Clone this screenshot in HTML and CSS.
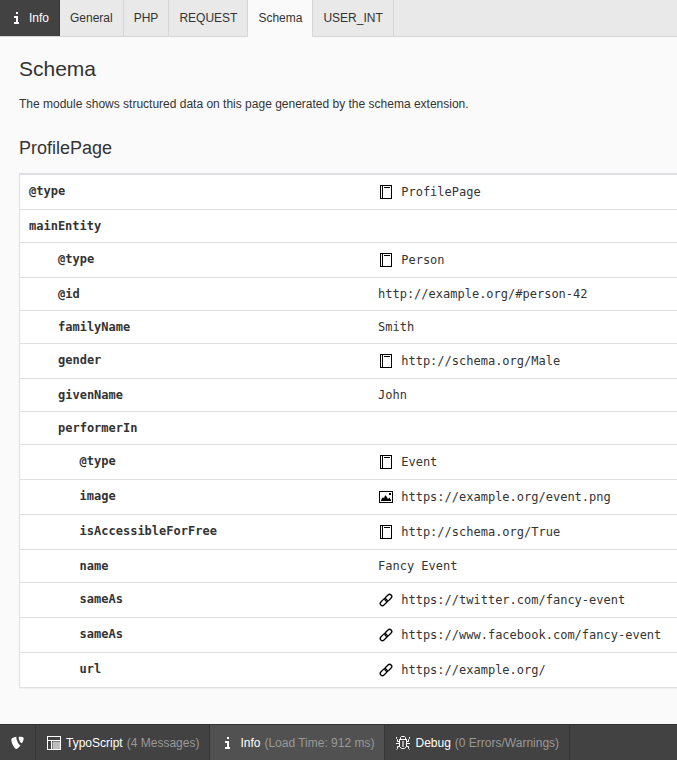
FILE: index.html
```
<!DOCTYPE html>
<html lang="en">
<head>
<meta charset="utf-8">
<title>Schema</title>
<link rel="stylesheet" href="styles.css">
</head>
<body>
<svg class="defs" width="0" height="0">
  <symbol id="book" viewBox="0 0 16 16"><path fill-rule="evenodd" d="M2 1h12v14H2zM3 2v12h1V2zM5 2v12h8V2z"/><path d="M6 3h6v1H6z"/></symbol>
  <symbol id="image" viewBox="0 0 16 16"><path fill-rule="evenodd" d="M1 2h14v12H1zM2 3v10h12V3z"/><path d="M3 12v-1l1.500-2.500h.8l.7.800L7 6.500h.800L10 10l1.500-1.500L13 11v1zM11 4h2v2h-2z"/></symbol>
  <symbol id="link" viewBox="0 0 16 16"><g fill="none" stroke="currentColor" stroke-width="1.300"><rect x="1.700" y="8" width="8" height="4.400" rx="2.200" transform="rotate(-45 5.700 10.200)"/><rect x="6.300" y="3.600" width="8" height="4.400" rx="2.200" transform="rotate(-45 10.300 5.800)"/></g></symbol>
  <symbol id="info" viewBox="0 0 16 16"><path d="M7 2h2v2H7zM6 6h3v6h1v2H5v-2h2V8H5V6z"/></symbol>
  <symbol id="typo3" viewBox="-1 -1 18 18"><path d="M11.100 10.300c-.2.1-.4.100-.6.100-1.800 0-4.400-6.200-4.400-8.200 0-.8.200-1 .4-1.200C4.300 1.300 1.600 2.100.8 3.100c-.2.300-.3.700-.3 1.200C.500 7.500 3.900 14.700 6.300 14.700c1.100 0 3-1.800 4.800-4.400M10 1c2.200 0 4.400.4 4.400 1.600 0 2.500-1.600 5.500-2.400 5.500-1.400 0-3.200-4-3.200-6C8.800 1.200 9.200 1 10 1"/></symbol>
  <symbol id="template" viewBox="0 0 16 16"><path fill-rule="evenodd" d="M1 1h14v14H1zM2 2v3h12V2zM2 6v8h3V6zM6 6v8h8V6z"/><path opacity=".65" d="M6.500 6.500H14V14H6.500z"/></symbol>
  <symbol id="bug" viewBox="0 0 16 16"><path fill="none" stroke="currentColor" d="M5.500 4V2.500l1-1h3l1 1V4M4 4.500h8M4.500 5v6.500l2 2h3l2-2V5M4 8.500H1M12 8.500h3M4 6.500H2.500v-2l-1-1V2M12 6.500h1.500v-2l1-1V2M4.500 11.500h-2v2l-1 1M11.500 11.500h2v2l1 1"/><path opacity=".55" d="M7 6h2v6H7z"/></symbol>
</svg>
<div class="panel">
  <nav class="tabs">
    <div class="tab tab-title"><svg class="icon"><use href="#info"/></svg><span>Info</span></div>
    <div class="tab">General</div>
    <div class="tab">PHP</div>
    <div class="tab">REQUEST</div>
    <div class="tab tab-active">Schema</div>
    <div class="tab">USER_INT</div>
  </nav>
  <main class="content">
    <h1>Schema</h1>
    <p>The module shows structured data on this page generated by the schema extension.</p>
    <h2>ProfilePage</h2>
    <table>
      <tr><th>@type</th><td><svg class="icon"><use href="#book"/></svg>ProfilePage</td></tr>
      <tr><th>mainEntity</th><td></td></tr>
      <tr class="level-1"><th>@type</th><td><svg class="icon"><use href="#book"/></svg>Person</td></tr>
      <tr class="level-1"><th>@id</th><td>http://example.org/#person-42</td></tr>
      <tr class="level-1"><th>familyName</th><td>Smith</td></tr>
      <tr class="level-1"><th>gender</th><td><svg class="icon"><use href="#book"/></svg>http://schema.org/Male</td></tr>
      <tr class="level-1"><th>givenName</th><td>John</td></tr>
      <tr class="level-1"><th>performerIn</th><td></td></tr>
      <tr class="level-2"><th>@type</th><td><svg class="icon"><use href="#book"/></svg>Event</td></tr>
      <tr class="level-2"><th>image</th><td><svg class="icon"><use href="#image"/></svg>https://example.org/event.png</td></tr>
      <tr class="level-2"><th>isAccessibleForFree</th><td><svg class="icon"><use href="#book"/></svg>http://schema.org/True</td></tr>
      <tr class="level-2"><th>name</th><td>Fancy Event</td></tr>
      <tr class="level-2"><th>sameAs</th><td><svg class="icon"><use href="#link"/></svg>https://twitter.com/fancy-event</td></tr>
      <tr class="level-2"><th>sameAs</th><td><svg class="icon"><use href="#link"/></svg>https://www.facebook.com/fancy-event</td></tr>
      <tr class="level-2"><th>url</th><td><svg class="icon"><use href="#link"/></svg>https://example.org/</td></tr>
    </table>
  </main>
  <footer class="bar">
    <div class="module module-logo"><svg class="icon"><use href="#typo3"/></svg></div>
    <div class="module"><svg class="icon"><use href="#template"/></svg><span>TypoScript</span><small>(4 Messages)</small></div>
    <div class="module module-active"><svg class="icon"><use href="#info"/></svg><span>Info</span><small>(Load Time: 912 ms)</small></div>
    <div class="module"><svg class="icon"><use href="#bug"/></svg><span>Debug</span><small>(0 Errors/Warnings)</small></div>
  </footer>
</div>
</body>
</html>
```
FILE: styles.css
```
* { box-sizing: border-box; }
body {
  margin: 0;
  overflow: hidden;
  background: #fafafa;
  color: #333;
  font: 12px/16px "Liberation Sans", Arial, sans-serif;
}
.defs { display: none; }
.icon { width: 16px; height: 16px; flex: none; fill: currentColor; }
.panel { display: flex; flex-direction: column; height: 760px; }

.tabs {
  display: flex;
  height: 37px;
  flex: none;
  background: #e9e9e9;
  box-shadow: inset 0 -1px #d6d6d6;
}
.tab {
  padding: 10px 10px 0;
  border-right: 1px solid #d6d6d6;
}
.tab-title {
  display: flex;
  gap: 4px;
  width: 60px;
  height: 36px;
  padding-left: 9px;
  border-right-color: #373737;
  background: #424242;
  color: #fff;
}
.tab-active { background: #fafafa; }

.content { flex: 1; min-height: 0; padding: 0 0 0 19px; }
h1, h2 { font-weight: 400; }
h1 { margin: 19px 0 0; font-size: 21px; line-height: 26px; }
p { margin: 14px 0 0; }
h2 { margin: 25px 0 0; font-size: 18px; line-height: 22px; }

table {
  width: 100%;
  margin-top: 14px;
  border: 1px solid #dee0e3;
  border-right: 0;
  border-spacing: 0;
  table-layout: fixed;
  background: #fff;
  box-shadow: 0 1px 1px rgba(0, 0, 0, .04);
  font: 12px/16px "DejaVu Sans Mono", monospace;
}
th, td {
  height: 33px;
  padding: 8px 0 8px 9px;
  border-top: 1px solid #dee0e3;
  text-align: left;
  vertical-align: top;
}
th { width: 349px; font-weight: 700; }
.level-1 th { padding-left: 38px; }
.level-2 th { padding-left: 59.6px; }
td .icon { margin-right: 7.23px; color: #000; vertical-align: -4px; }
td:has(.icon) { height: 35px; padding-top: 9px; }

.bar {
  display: flex;
  flex: none;
  height: 36px;
  border-top: 1px solid #333;
  background: #424242;
  color: #fff;
}
.module {
  display: flex;
  align-items: center;
  padding: 1px 10px 0;
  border-right: 1px solid #363636;
}
.module span { margin: 0 4px; }
.module-logo { width: 36px; padding-left: 9.5px; }
.module-active { background: #515151; }
.module small { color: #999; font-size: 12px; }
```
